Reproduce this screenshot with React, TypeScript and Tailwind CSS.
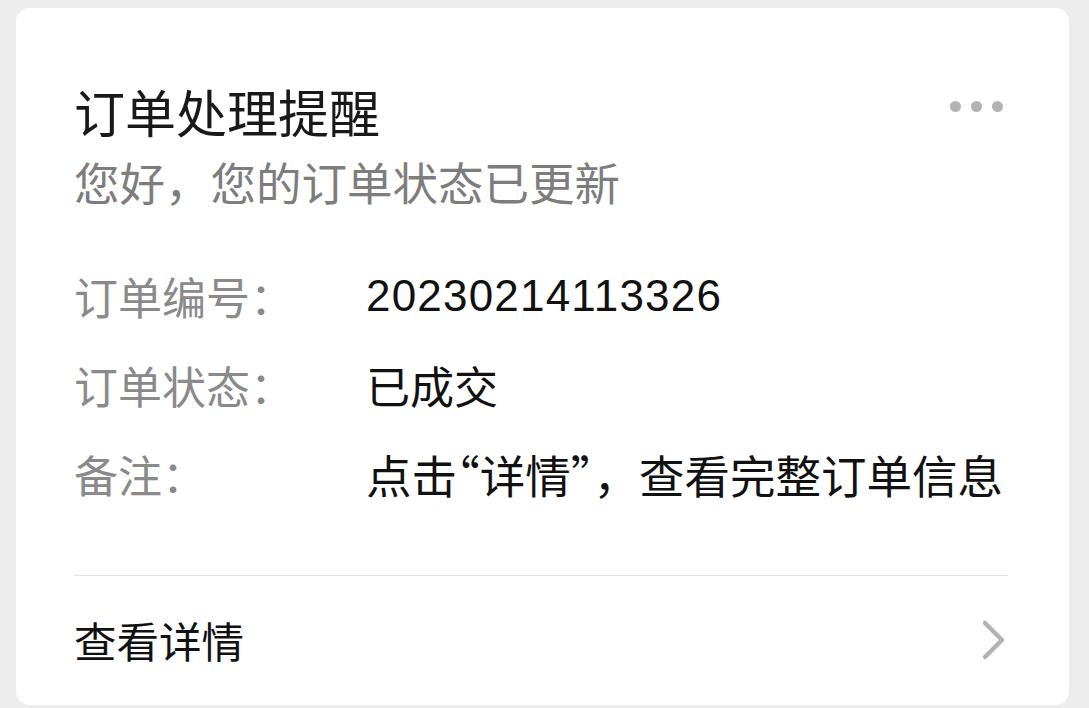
import React from "react";

const cjk = '"Noto Sans CJK SC", "Noto Sans", sans-serif';
const latin = '"Liberation Sans", "Noto Sans CJK SC", sans-serif';

function Row({ label, children }: { label: string; children: React.ReactNode }) {
  return (
    <div className="flex h-[60px] items-center">
      <div className="w-[292px] shrink-0 text-[44px] leading-[60px] text-[#8a8a8a]" style={{ fontFamily: cjk }}>
        {label}
      </div>
      {children}
    </div>
  );
}

export default function App() {
  return (
    <div className="min-h-[708px] w-full bg-[#ededed] pl-[16px] pr-[20px] pt-[8px]">
      <div className="flex h-[697px] flex-col rounded-[14px] bg-white pl-[58px] pr-[61px] pt-[73px]">
        <div className="flex items-center justify-between">
          <div className="text-[51px] leading-[60px] text-[#191919]" style={{ fontFamily: cjk }}>
            订单处理提醒
          </div>
          <div className="mr-[5px] mb-[10px] flex gap-[10px]">
            <span className="h-[11px] w-[11px] rounded-full bg-[#b3b3b3]" />
            <span className="h-[11px] w-[11px] rounded-full bg-[#b3b3b3]" />
            <span className="h-[11px] w-[11px] rounded-full bg-[#b3b3b3]" />
          </div>
        </div>
        <div className="mt-[12px] text-[45.5px] leading-[56px] text-[#7d7d7d]" style={{ fontFamily: cjk }}>
          您好，您的订单状态已更新
        </div>
        <div className="mt-[57px] flex flex-col gap-[29px]">
          <Row label="订单编号：">
            <div className="text-[44px] leading-[60px] tracking-[1.2px] text-[#111111]" style={{ fontFamily: latin }}>
              20230214113326
            </div>
          </Row>
          <Row label="订单状态：">
            <div className="text-[44px] leading-[60px] text-[#111111]" style={{ fontFamily: cjk }}>
              已成交
            </div>
          </Row>
          <Row label="备注：">
            <div className="whitespace-nowrap text-[45.5px] leading-[60px] text-[#111111]" style={{ fontFamily: cjk }}>
              点击<span className="[font-feature-settings:'halt']">“</span>详情<span className="[font-feature-settings:'halt']">”</span>，查看完整订单信息
            </div>
          </Row>
        </div>
        <div className="mt-[71px] h-px w-full bg-[#e5e5e5]" />
        <div className="mt-[34px] flex h-[60px] items-center justify-between">
          <div className="text-[42.5px] leading-[60px] text-[#111111]" style={{ fontFamily: cjk }}>
            查看详情
          </div>
          <svg width="26" height="42" viewBox="0 0 26 42" className="mr-[1px]">
            <path d="M4 4 L21 21 L4 38" fill="none" stroke="#b3b3b3" strokeWidth="4.5" strokeLinecap="round" strokeLinejoin="round" />
          </svg>
        </div>
      </div>
    </div>
  );
}
